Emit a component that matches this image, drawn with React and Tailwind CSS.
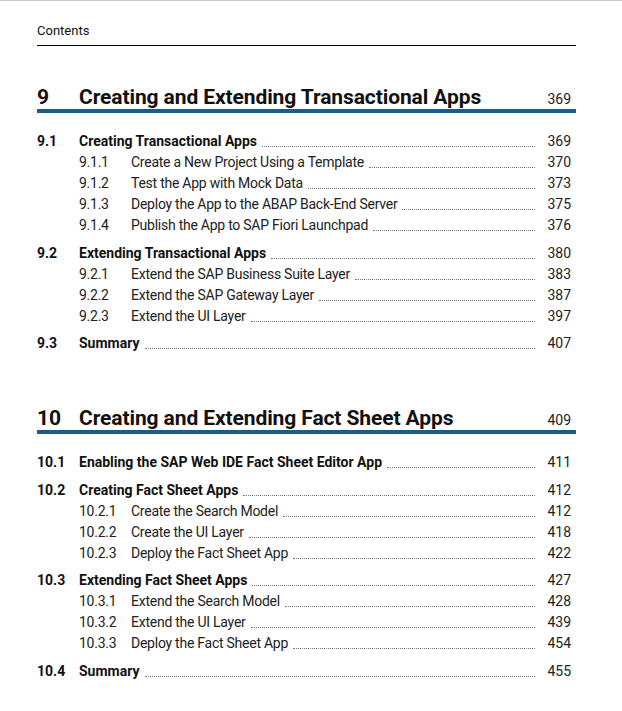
import React from "react";

const font = { fontFamily: "Roboto, 'Open Sans', sans-serif" };

const chapters = [
  {
    num: "9",
    title: "Creating and Extending Transactional Apps",
    page: "369",
    mt: "mt-[36px]",
    sections: [
      {
        num: "9.1",
        title: "Creating Transactional Apps",
        page: "369",
        subs: [
          ["9.1.1", "Create a New Project Using a Template", "370"],
          ["9.1.2", "Test the App with Mock Data", "373"],
          ["9.1.3", "Deploy the App to the ABAP Back-End Server", "375"],
          ["9.1.4", "Publish the App to SAP Fiori Launchpad", "376"],
        ],
      },
      {
        num: "9.2",
        title: "Extending Transactional Apps",
        page: "380",
        subs: [
          ["9.2.1", "Extend the SAP Business Suite Layer", "383"],
          ["9.2.2", "Extend the SAP Gateway Layer", "387"],
          ["9.2.3", "Extend the UI Layer", "397"],
        ],
      },
      { num: "9.3", title: "Summary", page: "407", subs: [] },
    ],
  },
  {
    num: "10",
    title: "Creating and Extending Fact Sheet Apps",
    page: "409",
    mt: "mt-[49px]",
    sections: [
      {
        num: "10.1",
        title: "Enabling the SAP Web IDE Fact Sheet Editor App",
        page: "411",
        subs: [],
      },
      {
        num: "10.2",
        title: "Creating Fact Sheet Apps",
        page: "412",
        subs: [
          ["10.2.1", "Create the Search Model", "412"],
          ["10.2.2", "Create the UI Layer", "418"],
          ["10.2.3", "Deploy the Fact Sheet App", "422"],
        ],
      },
      {
        num: "10.3",
        title: "Extending Fact Sheet Apps",
        page: "427",
        subs: [
          ["10.3.1", "Extend the Search Model", "428"],
          ["10.3.2", "Extend the UI Layer", "439"],
          ["10.3.3", "Deploy the Fact Sheet App", "454"],
        ],
      },
      { num: "10.4", title: "Summary", page: "455", subs: [] },
    ],
  },
];

const Leader = () => (
  <span className="flex-1 self-end mb-[5px] ml-[5px] border-b border-dotted border-[#777]" />
);

const Page = ({ children }) => (
  <span className="w-[41px] pr-[5px] text-right text-[14px] text-[#222]">{children}</span>
);

const Chapter = ({ chapter }) => (
  <div className={chapter.mt}>
    <div className="flex items-baseline h-[27px]">
      <span className="w-[42px] text-[21px] font-bold tracking-[-0.1px] text-[#111]">
        {chapter.num}
      </span>
      <span className="flex-1 text-[21px] font-bold tracking-[-0.1px] text-[#111]">
        {chapter.title}
      </span>
      <Page>{chapter.page}</Page>
    </div>
    <div className="h-[4px] bg-[#1b5d86]" />
    <div className="mt-[18px]">
      {chapter.sections.map((s, i) => (
        <div key={s.num} className={i > 0 ? "mt-[6.5px]" : ""}>
          <div className="flex items-center h-[21px]">
            <span className="w-[42px] text-[14px] font-bold text-[#111]">{s.num}</span>
            <span className="text-[14px] font-bold text-[#111]">{s.title}</span>
            <Leader />
            <Page>{s.page}</Page>
          </div>
          {s.subs.map(([n, t, p]) => (
            <div key={n} className="flex items-center h-[21px] pl-[42px]">
              <span className="w-[52px] text-[14px] tracking-[-0.25px] text-[#222]">{n}</span>
              <span className="text-[14px] tracking-[-0.25px] text-[#222]">{t}</span>
              <Leader />
              <Page>{p}</Page>
            </div>
          ))}
        </div>
      ))}
    </div>
  </div>
);

export default function App() {
  return (
    <div style={font} className="w-[622px] h-[711px] bg-white border-t border-[#c8c8c8] overflow-hidden">
      <div className="ml-[37px] w-[539px]">
        <div className="pt-[22px] pb-[6px] border-b border-black text-[13px] leading-[16px] text-[#111]">
          Contents
        </div>
        {chapters.map((c) => (
          <Chapter key={c.num} chapter={c} />
        ))}
      </div>
    </div>
  );
}
